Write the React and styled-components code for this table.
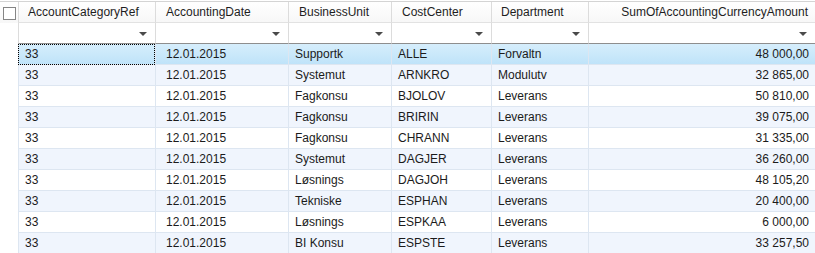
import React from 'react'
import styled, { createGlobalStyle } from 'styled-components'

const GlobalStyle = createGlobalStyle`
  html, body {
    margin: 0;
    padding: 0;
    background: #ffffff;
  }
  body {
    font-family: "Liberation Sans", Arial, sans-serif;
    font-size: 12px;
    color: #1b1b1b;
  }
`

const COLS = '18px 137px 133px 103px 100px 97px 1fr'

const Grid = styled.div`
  width: 815px;
  height: 253px;
  overflow: hidden;
  padding-top: 1px;
  box-sizing: border-box;
`

const HeaderRow = styled.div`
  display: grid;
  grid-template-columns: ${COLS};
  height: 21px;
  border-top: 1px solid #d4d4d4;
  background: linear-gradient(#ffffff, #f7f7f7);
`

const HeaderCell = styled.div`
  display: flex;
  align-items: center;
  justify-content: ${p => (p.$right ? 'flex-end' : 'flex-start')};
  padding: 0 ${p => (p.$right ? '7px' : '0')} 0 ${p => p.$pad || 10}px;
  border-left: ${p => (p.$first ? 'none' : '1px solid #dcdcdc')};
  border-bottom: 1px solid #e2e2e2;
  white-space: nowrap;
  overflow: hidden;
  color: #1e1e1e;
`

const CheckCell = styled.div`
  display: flex;
  align-items: flex-start;
  padding: 5px 0 0 3px;
`

const CheckBox = styled.span`
  display: block;
  width: 11px;
  height: 11px;
  border: 1px solid #858585;
  background: #ffffff;
`

const FilterRow = styled.div`
  display: grid;
  grid-template-columns: ${COLS};
  height: 21px;
`

const FilterCell = styled.div`
  display: flex;
  align-items: center;
  justify-content: flex-end;
  padding-right: 8px;
  border-left: ${p => (p.$first ? 'none' : '1px solid #dcdcdc')};
  border-bottom: ${p => (p.$first ? 'none' : '1px solid #8e8e8e')};
`

const Arrow = styled.span`
  display: block;
  width: 0;
  height: 0;
  margin-top: 2px;
  border-left: 4px solid transparent;
  border-right: 4px solid transparent;
  border-top: 4px solid #4a4a4a;
`

const DataRow = styled.div`
  display: grid;
  grid-template-columns: ${COLS};
  height: 21px;
`

const Gutter = styled.div``

const Cell = styled.div`
  display: flex;
  align-items: center;
  justify-content: ${p => (p.$right ? 'flex-end' : 'flex-start')};
  padding: 0 ${p => (p.$right ? '6px' : '0')} 0 ${p => p.$pad || 6}px;
  border-left: 1px solid #dde6f1;
  border-bottom: 1px solid #dde6f1;
  white-space: nowrap;
  overflow: hidden;
  background: ${p =>
    p.$selected
      ? 'linear-gradient(#d6eefc, #bfe3f9)'
      : p.$alt
      ? '#f0f5fd'
      : '#ffffff'};
  outline: ${p => (p.$focused ? '1px dotted #000' : 'none')};
  outline-offset: -1px;
`

const columns = [
  { key: 'cat', title: 'AccountCategoryRef', headPad: 9, pad: 6 },
  { key: 'date', title: 'AccountingDate', headPad: 10, pad: 10 },
  { key: 'unit', title: 'BusinessUnit', headPad: 10, pad: 6 },
  { key: 'cost', title: 'CostCenter', headPad: 10, pad: 6 },
  { key: 'dept', title: 'Department', headPad: 9, pad: 6 },
  { key: 'sum', title: 'SumOfAccountingCurrencyAmount', right: true },
]

const rows = [
  ['33', '12.01.2015', 'Supportk', 'ALLE', 'Forvaltn', '48 000,00'],
  ['33', '12.01.2015', 'Systemut', 'ARNKRO', 'Modulutv', '32 865,00'],
  ['33', '12.01.2015', 'Fagkonsu', 'BJOLOV', 'Leverans', '50 810,00'],
  ['33', '12.01.2015', 'Fagkonsu', 'BRIRIN', 'Leverans', '39 075,00'],
  ['33', '12.01.2015', 'Fagkonsu', 'CHRANN', 'Leverans', '31 335,00'],
  ['33', '12.01.2015', 'Systemut', 'DAGJER', 'Leverans', '36 260,00'],
  ['33', '12.01.2015', 'Løsnings', 'DAGJOH', 'Leverans', '48 105,20'],
  ['33', '12.01.2015', 'Tekniske', 'ESPHAN', 'Leverans', '20 400,00'],
  ['33', '12.01.2015', 'Løsnings', 'ESPKAA', 'Leverans', '6 000,00'],
  ['33', '12.01.2015', 'BI Konsu', 'ESPSTE', 'Leverans', '33 257,50'],
]

export default function App() {
  return (
    <>
      <GlobalStyle />
      <Grid>
        <HeaderRow>
          <CheckCell>
            <CheckBox />
          </CheckCell>
          {columns.map(c => (
            <HeaderCell key={c.key} $pad={c.headPad} $right={c.right}>
              {c.title}
            </HeaderCell>
          ))}
        </HeaderRow>
        <FilterRow>
          <FilterCell $first />
          {columns.map(c => (
            <FilterCell key={c.key}>
              <Arrow />
            </FilterCell>
          ))}
        </FilterRow>
        {rows.map((r, i) => (
          <DataRow key={i}>
            <Gutter />
            {r.map((v, j) => (
              <Cell
                key={j}
                $pad={columns[j].pad}
                $right={columns[j].right}
                $alt={i % 2 === 1}
                $selected={i === 0}
                $focused={i === 0 && j === 0}
              >
                {v}
              </Cell>
            ))}
          </DataRow>
        ))}
      </Grid>
    </>
  )
}
